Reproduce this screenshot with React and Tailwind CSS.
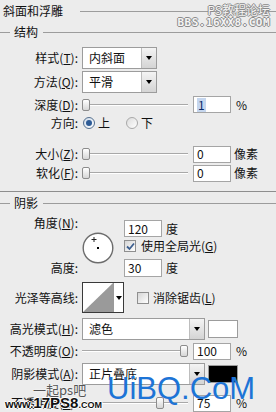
import React from "react";

const LINE = "h-px bg-[#9c9c9c]";

function Label({ children }) {
  return <div className="w-[78px] shrink-0 text-right whitespace-nowrap">{children}</div>;
}

function Select({ value, wide }) {
  return (
    <div className={`ml-[4px] flex h-full border border-[#9c9c9c] bg-white ${wide ? "w-[123px]" : "w-[75px]"}`}>
      <div className="flex-1 flex items-center pl-[6px]">{value}</div>
      <div className="w-[15px] flex items-center justify-center border-l border-[#bdbdbd] bg-linear-to-b from-[#f4f4f4] to-[#d4d4d4]">
        <div className="w-0 h-0 border-x-[3px] border-x-transparent border-t-[4px] border-t-black" />
      </div>
    </div>
  );
}

function Thumb() {
  return <div className="w-[8px] h-[12px] shrink-0 rounded-[2px] border border-[#8c8c8c] bg-linear-to-b from-white to-[#d6d6d6]" />;
}

function Slider({ value }) {
  const left = Math.round(value * 0.98);
  return (
    <div className="ml-[4px] flex items-center w-[106px] h-[12px]">
      <div className="h-[2px] border-t border-[#a8a8a8] bg-white" style={{ width: left }} />
      <Thumb />
      <div className="flex-1 h-[2px] border-t border-[#a8a8a8] bg-white" />
    </div>
  );
}

function Input({ children, className = "" }) {
  return (
    <div className={`w-[38px] h-[17px] shrink-0 border border-[#a5a5a5] bg-white flex items-center pl-[3px] ${className}`}>
      {children}
    </div>
  );
}

function Radio({ checked }) {
  return checked ? (
    <div className="w-[12px] h-[12px] rounded-full border border-[#55708f] bg-linear-to-br from-[#cfdceb] to-white flex items-center justify-center">
      <div className="w-[6px] h-[6px] rounded-full bg-[#2d5b96]" />
    </div>
  ) : (
    <div className="w-[12px] h-[12px] rounded-full border border-[#a8a8a8] bg-linear-to-br from-[#dcdcdc] to-white" />
  );
}

function Checkbox({ checked }) {
  return (
    <div className="w-[12px] h-[12px] shrink-0 border border-[#8f8f8f] bg-linear-to-br from-[#d6d6d6] to-white flex items-center justify-center">
      {checked && (
        <svg width="9" height="9" viewBox="0 0 9 9">
          <path d="M1 4.5 L3.5 7 L8 1.5" fill="none" stroke="#3d5f8f" strokeWidth="1.8" />
        </svg>
      )}
    </div>
  );
}

function GroupHeader({ title, className = "" }) {
  return (
    <div className={`flex items-center ${className}`}>
      <div className={`w-[10px] ${LINE}`} />
      <span className="ml-[4px]">{title}</span>
      <div className={`ml-[5px] flex-1 ${LINE}`} />
    </div>
  );
}

export default function App() {
  return (
    <div className="relative w-[276px] h-[412px] overflow-hidden bg-[#ececec] text-[12px] leading-[14px] text-[#111] font-['Noto_Sans_CJK_SC','Noto_Sans',sans-serif]">
      {/* title */}
      <div className="flex items-center h-[22px] pl-[3px]">
        <span>斜面和浮雕</span>
        <div className={`ml-[17px] flex-1 ${LINE}`} />
      </div>
      <GroupHeader title="结构" className="h-[20px]" />

      <div className="mt-[5px] h-[22px] flex items-center">
        <Label>样式(<u>T</u>):</Label>
        <Select value="内斜面" />
      </div>
      <div className="mt-[2px] h-[22px] flex items-center">
        <Label>方法(<u>Q</u>):</Label>
        <Select value="平滑" />
      </div>
      <div className="mt-[2px] h-[19px] flex items-center">
        <Label>深度(<u>D</u>):</Label>
        <Slider value={0} />
        <Input className="ml-[5px]">
          <span className="bg-[#c5d6ee] text-[#0a2a6a] px-px">1</span>
        </Input>
        <span className="ml-[5px]">%</span>
      </div>
      <div className="h-[18px] flex items-center">
        <Label>方向:</Label>
        <div className="ml-[5px] flex items-center">
          <Radio checked />
          <span className="ml-[3px]">上</span>
        </div>
        <div className="ml-[16px] flex items-center">
          <Radio />
          <span className="ml-[3px]">下</span>
        </div>
      </div>
      <div className="mt-[12px] h-[20px] flex items-center">
        <Label>大小(<u>Z</u>):</Label>
        <Slider value={0} />
        <Input className="ml-[5px]">0</Input>
        <span className="ml-[3px]">像素</span>
      </div>
      <div className="h-[18px] flex items-center">
        <Label>软化(<u>F</u>):</Label>
        <Slider value={0} />
        <Input className="ml-[5px]">0</Input>
        <span className="ml-[3px]">像素</span>
      </div>

      <div className="mt-[9px] h-px bg-[#8e8e8e]" />
      <GroupHeader title="阴影" className="h-[22px]" />

      {/* angle section */}
      <div className="mt-[2px] flex">
        <div className="w-[78px] shrink-0 text-right">
          <div>角度(<u>N</u>):</div>
          <div className="mt-[31px]">高度:</div>
        </div>
        <div className="ml-[4px] mt-[16px] w-[32px] h-[32px]">
          <svg width="32" height="32" viewBox="0 0 32 32">
            <circle cx="16" cy="16" r="14.8" fill="#fff" stroke="#6c6c6c" strokeWidth="1.4" />
            <path d="M12 5 v5 M9.5 7.5 h5" stroke="#222" strokeWidth="1" />
            <rect x="15" y="15" width="2" height="2" fill="#000" />
          </svg>
        </div>
        <div className="ml-[10px] mt-[4px] flex flex-col">
          <div className="flex items-center">
            <Input>120</Input>
            <span className="ml-[4px]">度</span>
          </div>
          <div className="mt-[2px] h-[14px] flex items-center">
            <Checkbox checked />
            <span className="ml-[5px]">使用全局光(<u>G</u>)</span>
          </div>
          <div className="mt-[6px] flex items-center">
            <Input className="h-[18px]">30</Input>
            <span className="ml-[4px]">度</span>
          </div>
        </div>
      </div>

      <div className="mt-[5px] h-[31px] flex items-center">
        <Label>光泽等高线:</Label>
        <div className="ml-[4px] w-[42px] h-full flex border border-[#3a3a3a] bg-white">
          <svg width="30" height="29" viewBox="0 0 30 29" className="shrink-0">
            <polygon points="0,29 30,0 30,29" fill="#9a9a9a" />
          </svg>
          <div className="flex-1 flex items-center justify-center border-l border-[#9a9a9a]">
            <div className="w-0 h-0 border-x-[3px] border-x-transparent border-t-[4px] border-t-black" />
          </div>
        </div>
        <div className="ml-[13px] flex items-center">
          <Checkbox />
          <span className="ml-[4px]">消除锯齿(<u>L</u>)</span>
        </div>
      </div>

      <div className="mt-[5px] h-[22px] flex items-center">
        <Label>高光模式(<u>H</u>):</Label>
        <Select value="滤色" wide />
        <div className="ml-[3px] w-[30px] h-[18px] border border-[#9c9c9c] bg-white" />
      </div>
      <div className="mt-[1px] h-[20px] flex items-center">
        <Label>不透明度(<u>O</u>):</Label>
        <Slider value={100} />
        <Input className="ml-[5px]">100</Input>
        <span className="ml-[5px]">%</span>
      </div>
      <div className="mt-[2px] h-[22px] flex items-center">
        <Label>阴影模式(<u>A</u>):</Label>
        <Select value="正片叠底" wide />
        <div className="ml-[3px] w-[30px] h-[18px] border border-[#9c9c9c] bg-black" />
      </div>
      <div className="mt-[8px] h-[20px] flex items-center">
        <Label>不透明度(<u>C</u>):</Label>
        <Slider value={75} />
        <Input className="ml-[5px]">75</Input>
        <span className="ml-[5px]">%</span>
      </div>

      {/* watermarks */}
      <div className="absolute right-[6px] top-[3px] flex flex-col items-end text-[#f4f4f4] font-['DejaVu_Sans_Mono','Noto_Sans_CJK_SC',monospace] [text-shadow:1px_0_0_#8a8a8a,-1px_0_0_#8a8a8a,0_1px_0_#8a8a8a,0_-1px_0_#8a8a8a]">
        <div className="text-[12px] leading-[13px] font-['Noto_Sans_CJK_SC',sans-serif]">PS教程论坛</div>
        <div className="text-[11px] leading-[13px] font-bold tracking-[0.5px]">BBS.16XX8.COM</div>
      </div>
      <div className="absolute left-[33px] top-[382px] text-[13px] leading-[15px] text-[#555] [text-shadow:0_0_2px_#fff]">一起ps吧</div>
      <div className="absolute left-[5px] top-[396px] flex items-baseline text-[#111] font-['Liberation_Sans',sans-serif] font-bold [text-shadow:1px_0_0_#fff,-1px_0_0_#fff,0_1px_0_#fff,0_-1px_0_#fff]">
        <span className="text-[11px] leading-[14px]">www.</span>
        <span className="text-[15px] leading-[14px]">17PS8</span>
        <span className="text-[9px] leading-[14px]">.COM</span>
      </div>
      <div className="absolute left-[107px] top-[371px] text-[31px] leading-[36px] text-[#1d74d6] font-['Liberation_Sans',sans-serif]">UiBQ.CoM</div>
    </div>
  );
}
